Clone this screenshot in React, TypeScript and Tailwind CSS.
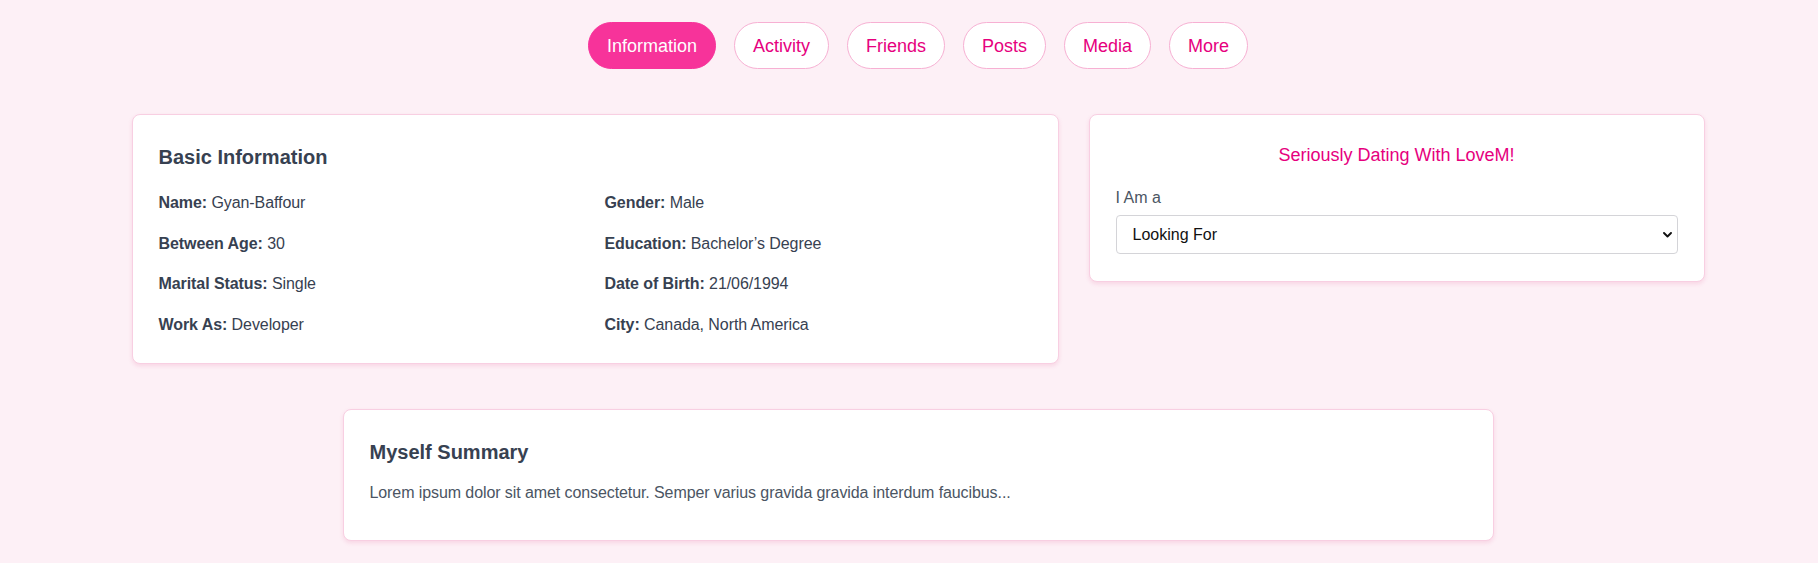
import { useState } from 'react'
import clsx from 'clsx'

const tabs = ['Information', 'Activity', 'Friends', 'Posts', 'Media', 'More']

const basicInfo: [string, string][] = [
  ['Name', 'Gyan-Baffour'],
  ['Gender', 'Male'],
  ['Between Age', '30'],
  ['Education', 'Bachelor’s Degree'],
  ['Marital Status', 'Single'],
  ['Date of Birth', '21/06/1994'],
  ['Work As', 'Developer'],
  ['City', 'Canada, North America'],
]

export default function App() {
  const [activeTab, setActiveTab] = useState('Information')
  const [lookingFor, setLookingFor] = useState('')

  return (
    <div className="min-h-screen bg-[#fdf0f6] pl-[18px] font-['Liberation_Sans',Arial,sans-serif] text-[#374151]">
      {/* tabs */}
      <nav className="flex justify-center gap-[18px] pt-[22px]">
        {tabs.map(tab => (
          <button
            key={tab}
            onClick={() => setActiveTab(tab)}
            className={clsx(
              'h-[47px] rounded-full border px-[18px] text-[18px] leading-[26px]',
              activeTab === tab
                ? 'border-[#f7339a] bg-[#f7339a] text-white'
                : 'border-[#f7b0d3] bg-white text-[#e6007e]'
            )}
          >
            {tab}
          </button>
        ))}
      </nav>

      {/* info + dating box */}
      <div className="mt-[45px] flex items-start justify-center gap-[30px]">
        <section className="w-[927px] rounded-lg border border-[#f8cfe2] bg-white px-[26px] pt-[28px] pb-[26px] shadow-[0_2px_4px_rgba(219,39,119,0.13)]">
          <h2 className="mb-[20px] text-[20px] leading-[28px] font-bold">Basic Information</h2>
          <div className="grid grid-cols-2 gap-x-[19px] gap-y-[16.7px] text-[16px] leading-[24px] tracking-[-0.08px]">
            {basicInfo.map(([label, value]) => (
              <p key={label}>
                <span className="font-bold">{label}:</span> {value}
              </p>
            ))}
          </div>
        </section>

        <section className="w-[616px] rounded-lg border border-[#f8cfe2] bg-white px-[26px] pt-[26px] pb-[27px] shadow-[0_2px_4px_rgba(219,39,119,0.13)]">
          <h3 className="mb-[17px] text-center text-[18px] leading-[28px] text-[#e6007e]">
            Seriously Dating With LoveM!
          </h3>
          <label className="mb-[5px] block text-[16px] leading-[24px] text-[#4b5563]">I Am a</label>
          <div className="relative">
            <select
              value={lookingFor}
              onChange={e => setLookingFor(e.target.value)}
              className="h-[39px] w-full appearance-none rounded border border-[#d4d4d8] bg-white pl-4 text-[16px] text-[#111111] outline-none"
            >
              <option value="">Looking For</option>
              <option value="man">Man</option>
              <option value="woman">Woman</option>
            </select>
            <svg
              className="pointer-events-none absolute right-[6px] top-1/2 -translate-y-1/2"
              width="9"
              height="6"
              viewBox="0 0 9 6"
              fill="none"
            >
              <path d="M1 1l3.5 3.5L8 1" stroke="#111111" strokeWidth="1.9" strokeLinecap="round" strokeLinejoin="round" />
            </svg>
          </div>
        </section>
      </div>

      {/* summary */}
      <div className="mt-[45px] flex justify-center">
        <section className="w-[1151px] rounded-lg border border-[#f8cfe2] bg-white px-[26px] pt-[28px] pb-[35px] shadow-[0_2px_4px_rgba(219,39,119,0.13)]">
          <h2 className="mb-[15px] text-[20px] leading-[28px] font-bold">Myself Summary</h2>
          <p className="text-[16px] leading-[24px] tracking-[-0.09px] text-[#4b5563]">
            Lorem ipsum dolor sit amet consectetur. Semper varius gravida gravida interdum faucibus...
          </p>
        </section>
      </div>
    </div>
  )
}
